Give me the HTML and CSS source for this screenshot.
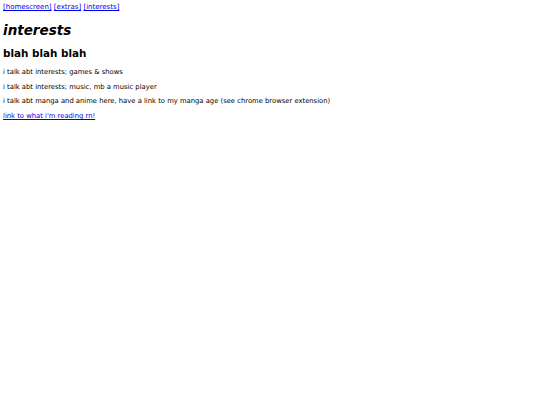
FILE: index.html
```html
<!DOCTYPE html>
<html>
<head>
<meta charset="utf-8">
<link rel="stylesheet" href="styles.css">
</head>
<body>
<nav class="nav"><a href="#">[homescreen]</a> <a href="#">[extras]</a> <a href="#">[interests]</a></nav>
<h1 class="title">interests</h1>
<h2 class="sub">blah blah blah</h2>
<p class="line">i talk abt interests; games &amp; shows</p>
<p class="line">i talk abt interests; music, mb a music player</p>
<p class="line">i talk abt manga and anime here, have a link to my manga age (see chrome browser extension)</p>
<p class="line"><a href="#">link to what i'm reading rn!</a></p>
</body>
</html>
```
FILE: styles.css
```css
html { background: #fff; }
body {
  margin: 3px;
  font-family: "DejaVu Sans", Verdana, sans-serif;
  font-size: 6.8px;
  color: #000;
}
a { color: #0000ee; }
.nav { font-size: 7px; line-height: 8px; }
.title {
  font-size: 13.5px;
  font-style: italic;
  font-weight: bold;
  margin: 11px 0 9px;
}
.sub {
  font-size: 10.4px;
  font-weight: bold;
  margin: 9px 0 9px;
}
.line { margin: 6.7px 0; }
```
